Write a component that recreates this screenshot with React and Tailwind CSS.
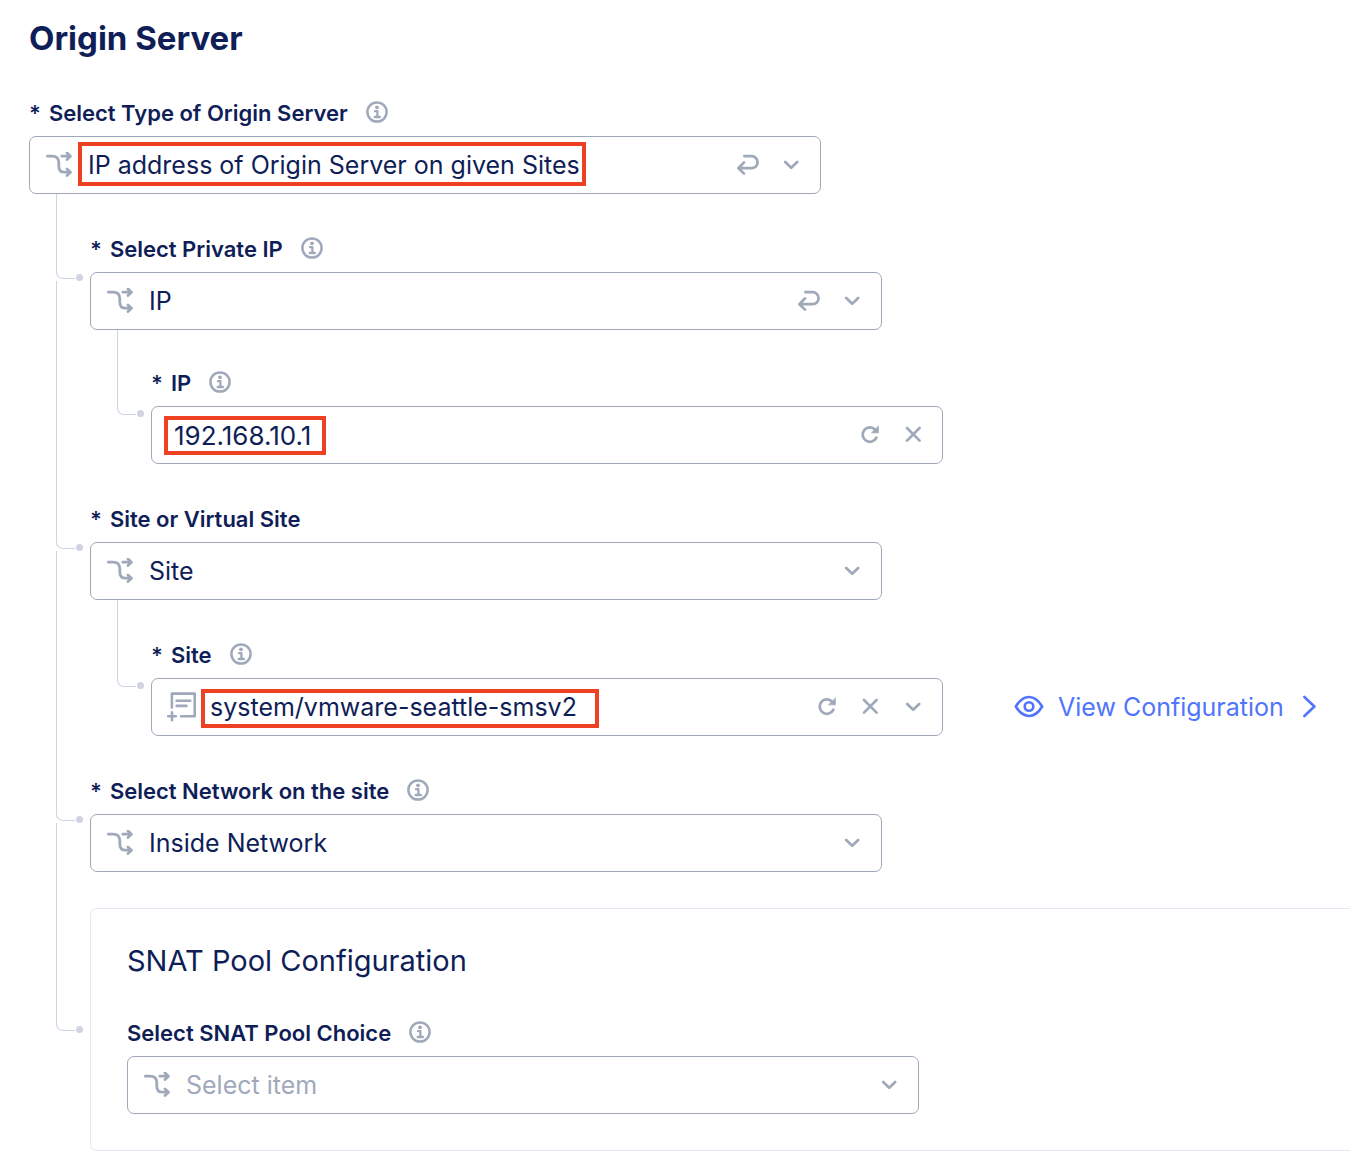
import React, { useState } from 'react';

function Svg({ size, className = '', width = 2, children }) {
  const [w, h] = size;
  return (
    <svg
      width={w}
      height={h}
      viewBox={`0 0 ${w} ${h}`}
      fill="none"
      stroke="currentColor"
      strokeWidth={width}
      strokeLinecap="round"
      strokeLinejoin="round"
      aria-hidden="true"
      className={`shrink-0 ${className}`}
    >
      {children}
    </svg>
  );
}

const InfoIcon = () => (
  <Svg size={[22, 22]}>
    <circle cx="11" cy="11" r="9.6" strokeWidth="2.5" />
    <circle cx="11" cy="6.3" r="1.9" fill="currentColor" stroke="none" />
    <path d="M9 10.2h2.4v5.6M8.7 16h5.2" strokeWidth="2.3" />
  </Svg>
);

const BranchIcon = () => (
  <Svg size={[26, 26]} width={2.8} className="text-[#a0a9ba]">
    <path d="M1.4 4.2H6C10.5 4.2 12.8 6.6 12.8 10.8v3.4c0 3.8 2 6 5.6 6H24" />
    <path d="M15.8 4.2H24M21 0.9l3.4 3.3-3.4 3.3M21 16.9l3.4 3.3-3.4 3.3" />
  </Svg>
);

const FormIcon = () => (
  <Svg size={[26, 30]} width={2.6} className="overflow-visible text-[#a0a9ba]">
    <path d="M3.9 15.6V1.6h22.8v22.6H13M8.6 8.7h13.6M8.6 13.9h9.8" />
    <path d="M4 20.4v7.8M0.2 24.3H7.8" />
  </Svg>
);

const ReturnIcon = () => (
  <Svg size={[22, 22]} width={2.7}>
    <path d="M7.4 2.2h7.2a6 6 0 0 1 0 12H1.8M7 8.4l-5.6 5.8L7 19.6" />
  </Svg>
);

const RefreshIcon = () => (
  <Svg size={[22, 22]} width={2.8}>
    <path d="M17.4 13.7a7.2 7.2 0 1 1-1.2-8" />
    <path d="M19.4 2.4v6.4h-6.6z" fill="currentColor" strokeWidth="0.8" />
  </Svg>
);

const CloseIcon = () => (
  <Svg size={[22, 22]} width={2.7}>
    <path d="M5 4l12.6 12.6M17.6 4L5 16.6" />
  </Svg>
);

const ChevronIcon = () => (
  <Svg size={[22, 22]} width={2.7} className="pointer-events-none">
    <path d="M5.2 8l6 5.8L17.2 8" />
  </Svg>
);

const EyeIcon = () => (
  <Svg size={[30, 24]} width={2.6}>
    <path d="M1.8 11.5C5.6 5.2 9.8 2 15 2S24.4 5.2 28.2 11.5C24.4 17.8 20.2 21 15 21S5.6 17.8 1.8 11.5z" />
    <circle cx="15" cy="11.5" r="4.3" />
  </Svg>
);

const ArrowIcon = () => (
  <Svg size={[14, 24]} width={2.6}>
    <path d="M2.4 2l10 9.5-10 9.5" />
  </Svg>
);

function IconButton({ label, children }) {
  return (
    <button type="button" aria-label={label} className="shrink-0 cursor-pointer">
      {children}
    </button>
  );
}

function FieldLabel({ id, text, required = true, info = true }) {
  return (
    <div className="mb-2.5 flex h-[26px] items-center gap-[18px]">
      <label htmlFor={id} className="flex gap-2 text-[22px] leading-[26px] font-semibold">
        {required && <span>*</span>}
        {text}
      </label>
      {info && (
        <span className="flex pb-[3px] text-[#a0a9ba]">
          <IconButton label={`About ${text}`}>
            <InfoIcon />
          </IconButton>
        </span>
      )}
    </div>
  );
}

function Control({ children, actions, mark }) {
  return (
    <div className="relative flex h-[58px] w-full max-w-[792px] items-center rounded-[7px] border border-[#9fa7b8] bg-white pr-[18px] pl-4">
      {children}
      <div className="flex items-center gap-[21px] text-[#a0a9ba]">{actions}</div>
      {mark && (
        <span className={`pointer-events-none absolute border-4 border-[#ee4023] ${mark}`} />
      )}
    </div>
  );
}

function SelectField({ id, text, options, placeholder, actions, mark, icon, required, info, aside }) {
  const [value, setValue] = useState(placeholder ? '' : options[0]);
  return (
    <div>
      <FieldLabel id={id} text={text} required={required} info={info} />
      <div className="flex items-center gap-[71px]">
        <Control
          mark={mark}
          actions={
            <>
              {actions}
              <ChevronIcon />
            </>
          }
        >
          {icon || <BranchIcon />}
          <select
            id={id}
            value={value}
            onChange={(e) => setValue(e.target.value)}
            className={`ml-4 h-full min-w-0 flex-1 appearance-none bg-transparent pt-0.5 text-[25px] outline-none ${value ? '' : 'text-[#a0a9ba]'}`}
          >
            {placeholder && <option value="">{placeholder}</option>}
            {options.map((o) => (
              <option key={o}>{o}</option>
            ))}
          </select>
        </Control>
        {aside}
      </div>
    </div>
  );
}

function Branch({ children, last, gap = 'pt-[42px]', elbow = 'h-[85px]', tail = 'top-[87px]' }) {
  return (
    <li className={`relative pl-[61px] ${gap}`}>
      <span
        className={`absolute top-0 left-[27px] w-[19px] rounded-bl-[7px] border-b border-l border-[#cfd3e3] ${elbow}`}
      >
        <span className="absolute -right-[8px] -bottom-[3px] size-[7px] rounded-full bg-[#cfd3e3]" />
      </span>
      {!last && <span className={`absolute bottom-0 left-[27px] border-l border-[#cfd3e3] ${tail}`} />}
      {children}
    </li>
  );
}

export default function App() {
  const [ip, setIp] = useState('192.168.10.1');
  return (
    <main
      className="overflow-hidden bg-white pt-[18px] pb-[9px] pl-[29px] text-[#0f1e57]"
      style={{ fontFamily: 'Inter, sans-serif' }}
    >
      <h1 className="mb-[42px] text-[33px] leading-10 font-bold">Origin Server</h1>
      <SelectField
        id="origin-type"
        text="Select Type of Origin Server"
        options={['IP address of Origin Server on given Sites']}
        mark="left-12 top-[5px] w-[508px] h-11"
        actions={
          <IconButton label="Reset">
            <ReturnIcon />
          </IconButton>
        }
      />
      <ul>
        <Branch>
          <SelectField
            id="private-ip"
            text="Select Private IP"
            options={['IP']}
            actions={
              <IconButton label="Reset">
                <ReturnIcon />
              </IconButton>
            }
          />
          <ul>
            <Branch last gap="pt-10">
              <FieldLabel id="ip" text="IP" />
              <Control
                mark="left-3 top-[9px] w-[162px] h-[39px]"
                actions={
                  <>
                    <IconButton label="Restore">
                      <RefreshIcon />
                    </IconButton>
                    <IconButton label="Clear">
                      <CloseIcon />
                    </IconButton>
                  </>
                }
              >
                <input
                  id="ip"
                  value={ip}
                  onChange={(e) => setIp(e.target.value)}
                  className="h-full min-w-0 flex-1 bg-transparent pl-1.5 text-[26px] outline-none"
                />
              </Control>
            </Branch>
          </ul>
        </Branch>
        <Branch>
          <SelectField id="site-kind" text="Site or Virtual Site" options={['Site']} info={false} />
          <ul>
            <Branch last elbow="h-[87px]">
              <SelectField
                id="site"
                text="Site"
                options={['system/vmware-seattle-smsv2']}
                icon={<FormIcon />}
                mark="left-[49px] top-[10px] w-[398px] h-[39px]"
                actions={
                  <>
                    <IconButton label="Restore">
                      <RefreshIcon />
                    </IconButton>
                    <IconButton label="Clear">
                      <CloseIcon />
                    </IconButton>
                  </>
                }
                aside={
                  <a
                    href="#configuration"
                    className="flex shrink-0 items-center gap-3.5 text-[25px] whitespace-nowrap text-[#5074fb]"
                  >
                    <EyeIcon />
                    <span className="pt-0.5 pr-1">View Configuration</span>
                    <ArrowIcon />
                  </a>
                }
              />
            </Branch>
          </ul>
        </Branch>
        <Branch>
          <SelectField id="network" text="Select Network on the site" options={['Inside Network']} />
        </Branch>
        <Branch last gap="pt-9" elbow="h-[159px]">
          <section className="rounded-l-[7px] border border-r-0 border-[#e5e6f2] pt-8 pb-9 pl-9">
            <h2 className="mb-[39px] text-[29px] leading-10">SNAT Pool Configuration</h2>
            <SelectField
              id="snat"
              text="Select SNAT Pool Choice"
              placeholder="Select item"
              options={['No SNAT Pool']}
              required={false}
            />
          </section>
        </Branch>
      </ul>
    </main>
  );
}
